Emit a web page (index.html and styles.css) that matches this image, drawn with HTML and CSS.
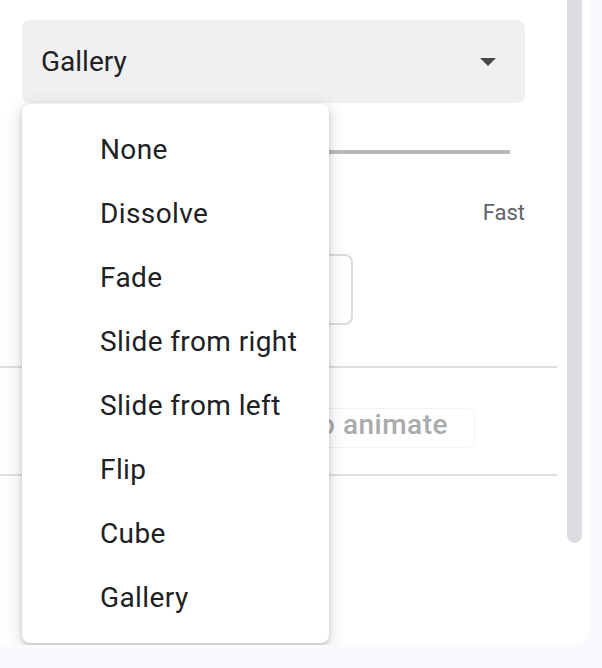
FILE: index.html
```html
<!DOCTYPE html>
<html lang="en">
<head>
<meta charset="utf-8">
<title>Transitions</title>
<link rel="stylesheet" href="styles.css">
</head>
<body>
<div class="panel">
  <div class="content">
    <div class="section">
      <div class="select">
        <span class="select-value">Gallery</span>
        <svg class="select-arrow" width="16" height="8" viewBox="0 0 16 8"><path d="M0 0h16L8 8z" fill="#444746"/></svg>
      </div>
      <div class="slider">
        <div class="slider-active"></div>
        <div class="slider-thumb"></div>
        <div class="slider-rest"></div>
      </div>
      <div class="slider-labels">
        <span>Slow</span>
        <span>Fast</span>
      </div>
      <button class="btn-outline">Apply to all slides</button>
    </div>
    <div class="divider"></div>
    <div class="section">
      <button class="btn-disabled">Select an object to animate</button>
    </div>
    <div class="divider divider-2"></div>
  </div>
  <div class="scroll-thumb"></div>
  <ul class="menu">
    <li class="menu-item">None</li>
    <li class="menu-item">Dissolve</li>
    <li class="menu-item">Fade</li>
    <li class="menu-item">Slide from right</li>
    <li class="menu-item">Slide from left</li>
    <li class="menu-item">Flip</li>
    <li class="menu-item">Cube</li>
    <li class="menu-item">Gallery</li>
  </ul>
</div>
</body>
</html>
```
FILE: styles.css
```css
* { box-sizing: border-box; }
html, body { margin: 0; padding: 0; }
body {
  background: #f8fafd;
  font-family: Roboto, "Liberation Sans", Arial, sans-serif;
  color: #202124;
  width: 602px;
  height: 668px;
  overflow: hidden;
}
.panel {
  position: relative;
  width: 590px;
  height: 645px;
  background: #ffffff;
  border-bottom-right-radius: 18px;
  overflow: hidden;
}
.content {
  width: 557px;
  padding-top: 20px;
}
.section {
  padding: 0 32px 0 22px;
  display: flex;
  flex-direction: column;
  align-items: flex-start;
}
.select {
  width: 503px;
  height: 83px;
  background: #f0f0f0;
  border-radius: 8px;
  display: flex;
  align-items: center;
  justify-content: space-between;
  padding: 0 29px 0 19px;
  font-size: 28px;
  color: #202124;
}
.select-value { line-height: 34px; }
.select-arrow { display: block; }
.slider {
  width: 503px;
  margin-top: 47px;
  height: 4px;
  padding: 0 15px;
  display: flex;
  align-items: center;
}
.slider-active {
  width: 120px;
  height: 4px;
  background: #1a73e8;
}
.slider-thumb {
  width: 24px;
  height: 24px;
  border-radius: 50%;
  background: #1a73e8;
  flex: none;
}
.slider-rest {
  flex: 1;
  height: 4px;
  background: #bababa;
}
.slider-labels {
  width: 503px;
  margin-top: 46px;
  display: flex;
  justify-content: space-between;
  font-size: 22px;
  line-height: 26px;
  color: #5f6368;
}
.btn-outline {
  margin-top: 28px;
  width: 331px;
  height: 71px;
  border: 2px solid #dadce0;
  border-radius: 8px;
  background: #fff;
  font-family: inherit;
  font-size: 28px;
  font-weight: 500;
  color: #1a73e8;
  letter-spacing: 0.5px;
}
.divider {
  margin-top: 41px;
  height: 2px;
  background: #dedfe1;
}
.divider-2 { margin-top: 26px; }
.btn-disabled {
  margin-top: 40px;
  width: 453px;
  height: 40px;
  border: 1px solid #f2f2f2;
  border-radius: 8px;
  background: #fff;
  padding: 0 26px 6px 0;
  display: flex;
  justify-content: flex-end;
  font-family: inherit;
  font-size: 28px;
  line-height: 32px;
  font-weight: 500;
  letter-spacing: 0.5px;
  color: #a9abac;
}
.scroll-thumb {
  position: absolute;
  left: 567px;
  top: -20px;
  width: 15px;
  height: 563px;
  border-radius: 8px;
  background: #dadce0;
}
.menu {
  position: absolute;
  left: 22px;
  top: 104px;
  width: 307px;
  margin: 0;
  padding: 13px 0 14px;
  list-style: none;
  background: #ffffff;
  border-radius: 8px;
  box-shadow: 0 4px 14px 4px rgba(60, 64, 67, 0.13), 0 2px 4px rgba(60, 64, 67, 0.22);
}
.menu-item {
  height: 64px;
  padding-left: 78px;
  display: flex;
  align-items: center;
  font-size: 28px;
  letter-spacing: 0.4px;
  color: #202124;
  white-space: nowrap;
}
```
